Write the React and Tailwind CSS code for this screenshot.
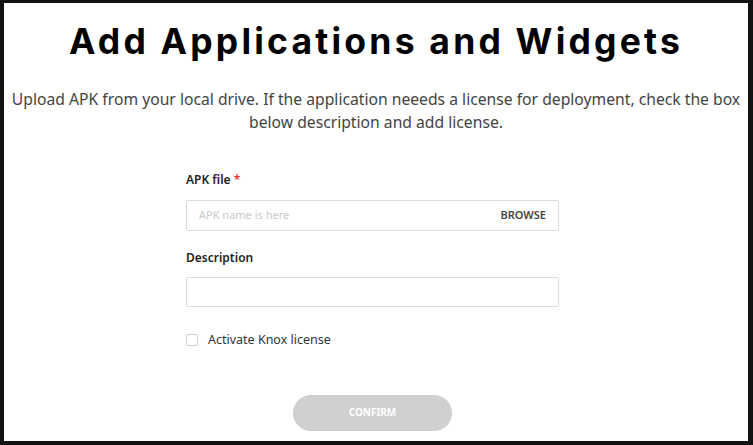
export default function App() {
  return (
    <div className="h-[445px] w-[753px] overflow-hidden bg-[#111]">
      <div className="ml-1 mt-[3px] h-[438px] w-[744px] bg-white" style={{ fontFamily: '"Noto Sans", sans-serif' }}>
        <h1 className="pt-[17px] text-center text-[35.5px] font-bold leading-[44px] tracking-[3.2px] text-black" style={{ fontFamily: 'Inter, sans-serif' }}>
          Add Applications and Widgets
        </h1>
        <p className="mt-[24px] text-center text-[15.7px] leading-[23px] text-[#444]">
          Upload APK from your local drive. If the application neeeds a license for deployment, check the box
          <br />
          below description and add license.
        </p>

        <div className="ml-[182px] mt-[38px] w-[373px]">
          <label className="block text-[12px] font-semibold leading-4 text-[#222]">
            APK file <span className="text-[#e33]">*</span>
          </label>
          <div className="mt-[12px] flex h-[31px] items-center justify-between rounded-[2px] border border-[#dcdcdc] px-3">
            <span className="text-[11px] text-[#c8c8c8]">APK name is here</span>
            <span className="text-[11px] font-semibold text-[#444]">BROWSE</span>
          </div>

          <label className="mt-[19px] block text-[12px] font-semibold leading-4 text-[#222]">Description</label>
          <input className="mt-[11px] block h-[30px] w-full rounded-[2px] border border-[#dcdcdc] px-3 text-[11px] outline-none" />

          <label className="mt-[24px] flex items-center gap-[10px] text-[12.5px] text-[#333]">
            <span className="h-3 w-3 rounded-[2px] border border-[#cfcfcf]" />
            Activate Knox license
          </label>

          <div className="mt-[45px] flex justify-center">
            <button className="h-[36px] w-[159px] rounded-full bg-[#d0d0d0] text-[10px] font-bold text-white">CONFIRM</button>
          </div>
        </div>
      </div>
    </div>
  );
}
